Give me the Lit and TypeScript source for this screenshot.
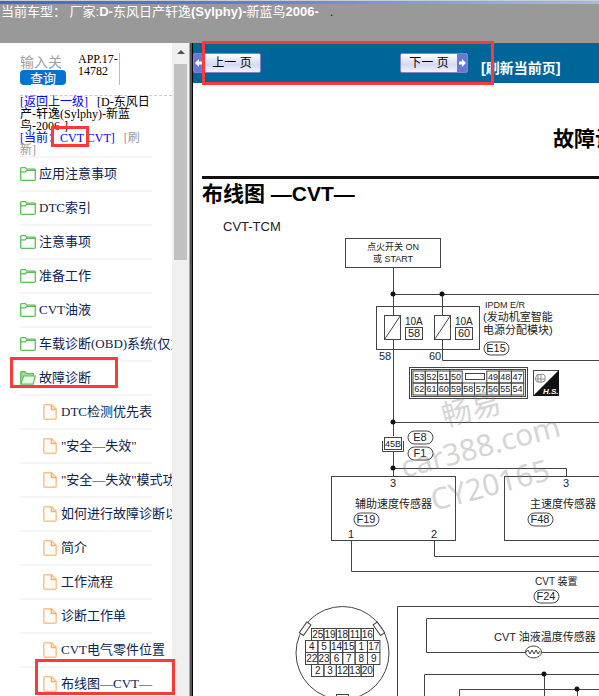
import { LitElement, html, svg, css } from "lit";
import { customElement } from "lit/decorators.js";
import { classMap } from "lit/directives/class-map.js";

type Kind = "folder" | "open" | "file";

const TREE: { kind: Kind; label: string }[] = [
  { kind: "folder", label: "应用注意事项" },
  { kind: "folder", label: "DTC索引" },
  { kind: "folder", label: "注意事项" },
  { kind: "folder", label: "准备工作" },
  { kind: "folder", label: "CVT油液" },
  { kind: "folder", label: "车载诊断(OBD)系统(仅为" },
  { kind: "open", label: "故障诊断" },
  { kind: "file", label: "DTC检测优先表" },
  { kind: "file", label: '"安全—失效"' },
  { kind: "file", label: '"安全—失效"模式功能' },
  { kind: "file", label: "如何进行故障诊断以" },
  { kind: "file", label: "简介" },
  { kind: "file", label: "工作流程" },
  { kind: "file", label: "诊断工作单" },
  { kind: "file", label: "CVT电气零件位置" },
  { kind: "file", label: "布线图—CVT—" },
];

const icon = (kind: Kind) => {
  if (kind === "file")
    return html`<svg class="ico" width="14" height="16" viewBox="0 0 14 16" fill="none" stroke="#f8c48c" stroke-width="1.5">
      <path d="M2 .8h6.6l4.6 4.6v8.6q0 1.2-1.2 1.2H2q-1.2 0-1.2-1.2V2Q.8.8 2 .8z" fill="#fffdfa" />
      <path d="M8.400 1v4.600H13" stroke="#f2b06c" />
    </svg>`;
  if (kind === "open")
    return html`<svg class="ico" width="16" height="14" viewBox="0 0 16 14" stroke="#5cbd5c" stroke-width="1.2">
      <path d="M.7 13V1.6q0-.9.9-.9H5l1.2 1.8h7.2v2.4" fill="#9bdc9b" />
      <path d="M.8 13.2 3.6 5h11.700l-2.200 8.200z" fill="#e9f9e6" />
    </svg>`;
  return html`<svg class="ico" width="16" height="14" viewBox="0 0 16 14" stroke="#5cbf5c" stroke-width="1.3">
    <path d="M.7 12.2V1.6q0-.9.9-.9h3.800l1.200 1.400h8q.7 0 .7.7v9.400q0 1.100-1.100 1.100H1.8Q.7 13.3.7 12.2z" fill="#fbfffb" />
    <path d="M.7 4.8h4.600l1.300-1.400h8.600" fill="none" />
  </svg>`;
};

@customElement("tree-nav")
export class TreeNav extends LitElement {
  static styles = css`
    :host { display: block; }
    ul { list-style: none; margin: 0; padding: 0; width: 132px; border-top: 2px solid #f5f5f5; }
    li { height: 32px; border-bottom: 2px solid #f5f5f5; }
    a {
      display: flex; align-items: center; gap: 3px; height: 32px;
      font-size: 13px; line-height: 16px; white-space: nowrap;
      color: #0c2450; text-decoration: none;
    }
    .file { padding-left: 23px; gap: 4px; }
    .ico { flex: none; }
  `;
  render() {
    return html`<ul>
      ${TREE.map(
        (n) => html`<li><a href="#" class=${classMap({ file: n.kind === "file" })}>${icon(n.kind)}<span>${n.label}</span></a></li>`
      )}
    </ul>`;
  }
}

const dot = (x: number, y: number) => svg`<circle cx=${x} cy=${y} r="2.5" fill="#111" />`;
const txt = (x: number, y: number, size: number, s: string, anchor = "start") =>
  svg`<text x=${x} y=${y} font-size=${size} text-anchor=${anchor}>${s}</text>`;
const pill = (cx: number, cy: number, s: string) => svg`
  <rect class="l" x=${cx - 12} y=${cy - 6} width="25" height="13" rx="6.5" />
  ${txt(cx, cy + 4, 11, s, "middle")}`;
const cell = (x: number, y: number, w: number, h: number, s: string, size: number) => svg`
  <rect class="l" x=${x} y=${y} width=${w} height=${h} />
  ${txt(x + w / 2, y + h / 2 + size * 0.36, size, s, "middle")}`;
const row = (x: number, y: number, w: number, h: number, size: number, items: string[]) =>
  items.map((s, i) => (s ? cell(x + i * w, y, w, h, s, size) : null));

@customElement("wiring-diagram")
export class WiringDiagram extends LitElement {
  static styles = css`
    :host { display: block; }
    svg { display: block; }
    text { font-family: "Liberation Sans", "Noto Sans CJK SC", sans-serif; fill: #222; }
    .l { fill: none; stroke: #444; stroke-width: 1; }
    .f { fill: #fff; stroke: #444; stroke-width: 1; }
    .mark text { font-family: "Noto Sans", "Noto Sans CJK SC", sans-serif; fill: #777; }
    .hs { font-weight: bold; font-style: italic; fill: #fff; }
  `;
  render() {
    return html`<svg width="786" height="520" viewBox="202 236 786 520" role="img" aria-label="CVT-TCM 布线图">
      <rect class="l" x="345.5" y="238.5" width="95" height="29" />
      ${txt(393, 250, 9, "点火开关 ON", "middle")} ${txt(393, 262, 9, "或 START", "middle")}

      <path class="l" d="M393.5 268V436M393.5 294.5H988M442.5 294.5V315M442.5 339V360.5H988" />
      <rect class="l" x="376.5" y="306.5" width="103" height="43" />
      <rect class="f" x="384.5" y="315.5" width="16" height="24" />
      <rect class="f" x="434.5" y="315.5" width="16" height="24" />
      <path class="l" d="M384.5 339.5l16-24M434.5 339.5l16-24" />
      ${dot(393, 294)} ${dot(442, 294)}
      ${txt(405, 325, 10, "10A")} ${txt(455, 325, 10, "10A")}
      ${cell(405.5, 327.5, 17, 12, "58", 11)} ${cell(455.5, 327.5, 17, 12, "60", 11)}
      ${txt(379, 360, 11, "58")} ${txt(429, 360, 11, "60")}
      ${txt(485, 308, 9, "IPDM E/R")} ${txt(483, 321, 11, "(发动机室智能")} ${txt(483, 334, 11, "电源分配模块)")}
      ${pill(496, 348, "E15")}

      <rect class="l" x="409.5" y="367.5" width="118" height="31" />
      <rect class="l" x="411.5" y="369.5" width="114" height="27" />
      ${row(413, 371, 12.3, 12, 9, ["53", "52", "51", "50", "", "", "49", "48", "47"])}
      ${row(413, 383, 12.3, 12, 9, ["62", "61", "60", "59", "58", "57", "56", "55", "54"])}
      <rect class="l" x="465.5" y="373.5" width="19" height="6" />

      <rect class="f" x="533.5" y="370.5" width="25" height="25" stroke-width=".5" />
      <path d="M559 370v26h-26z" fill="#111" />
      <path d="M535 379l2-4 6-1 2 2v5l-3 1h-5zM538 374v8M541 374v9M535 379h10" fill="none" stroke="#777" stroke-width=".8" />
      <text class="hs" x="543" y="394" font-size="8">H.S.</text>

      <path class="l" d="M393.5 422.5H988M393.5 452V476M393.5 468.5H566.5V476" />
      ${dot(393, 422)} ${dot(393, 468)}
      <rect class="f" x="384.5" y="437.5" width="17" height="12" />
      <path class="l" d="M382.5 441v10.500H403.5V441" />
      ${txt(393, 447, 9, "45B", "middle")}
      ${pill(420, 437, "E8")} ${pill(420, 453, "F1")}

      <rect class="l" x="331.5" y="476.5" width="124" height="64" />
      <rect class="l" x="504.5" y="476.5" width="124" height="64" />
      ${txt(393, 487, 11, "3", "middle")} ${txt(566, 487, 11, "3", "middle")}
      ${txt(355, 508, 11, "辅助速度传感器")} ${txt(530, 508, 11, "主速度传感器")}
      ${pill(366, 519, "F19")} ${pill(540, 519, "F48")}
      ${txt(351, 538, 11, "1", "middle")} ${txt(434, 538, 11, "2", "middle")}
      <path class="l" d="M351.5 540V571.5H988M434.5 540V556.5H988" />

      ${txt(535, 585, 10, "CVT 装置")} ${pill(546, 596, "F24")}
      <path class="l" d="M397.5 756V606.5H988M988 652.5H426.5V618.5H988M424.5 756V674.5H988M459.5 756V689.5H988M544.5 674V756M577.5 689V756" />
      ${txt(494, 641, 11, "CVT 油液温度传感器")}
      <ellipse class="f" cx="533.5" cy="652" rx="8" ry="6" />
      <path class="l" d="M526 652l2-2 2 4 2-4 2 4 2-4 2 4 2-3" />
      ${dot(544, 674)} ${dot(577, 689)}

      <circle class="l" cx="342.5" cy="653" r="46.5" />
      <rect class="f" x="303" y="622" width="5" height="13" transform="rotate(35 305 628)" />
      <rect class="f" x="376" y="622" width="5" height="13" transform="rotate(-35 379 628)" />
      <rect class="f" x="336.5" y="694.5" width="12" height="6" />
      ${row(311.5, 628.5, 12.4, 12, 10, ["25", "19", "18", "11", "16"])}
      ${row(305.5, 640.5, 12.4, 12, 10, ["4", "5", "14", "15", "1", "17"])}
      ${row(305.5, 652.5, 12.4, 12, 10, ["22", "23", "6", "7", "8", "9"])}
      ${row(311.5, 664.5, 12.4, 12, 10, ["2", "3", "12", "13", "20"])}

      <g class="mark" opacity=".3">
        <g transform="rotate(-15 445 427)">${txt(445, 427, 30, "畅易")}</g>
        <g transform="rotate(-15 404 478)">${txt(404, 478, 30, "car388.com")}</g>
        <g transform="rotate(-15 434 511)">${txt(434, 511, 30, "CY20165")}</g>
      </g>
    </svg>`;
  }
}

@customElement("app-root")
export class AppRoot extends LitElement {
  static styles = css`
    :host {
      display: flex; flex-direction: column; position: relative;
      height: 100vh; overflow: hidden; background: #fff; color: #000;
      font-family: "Liberation Serif", "Noto Sans CJK SC", serif;
    }
    header {
      flex: none; height: 43px; box-sizing: border-box; background: #999; color: #fff;
      font: 13px/16px "Liberation Sans", "Noto Sans CJK SC", sans-serif;
    }
    .strip { height: 4px; background: linear-gradient(90deg, #3f69c0, #5b7fd0 40%, #a9b9e6); border-top: 1px solid #c8ccd4; box-sizing: border-box; }
    .model { margin: 0; padding-left: 1px; white-space: pre; }
    .speck { color: #222; }
    .frames { flex: 1; display: flex; min-height: 0; }
    aside { flex: none; width: 152px; padding: 10px 0 0 20px; overflow: hidden; }
    .top { display: flex; gap: 12px; height: 42px; border-bottom: 1px dashed #ccc; }
    form { width: 46px; margin: 0; }
    input {
      display: block; width: 41px; height: 17px; border: 0; padding: 0; outline: 0; background: none;
      font: 14px/17px "Noto Sans CJK SC", sans-serif;
    }
    input::placeholder { color: #a0a0a0; opacity: 1; }
    .query {
      display: block; width: 46px; height: 15px; padding: 0; border: 0; border-radius: 4px;
      background: #0674cf; color: #fff; font: 13px/15px "Noto Sans CJK SC", sans-serif;
    }
    .ver { width: 41px; height: 32px; border-right: 1px solid #bbb; font-size: 12px; line-height: 12px; }
    .crumb { margin: 0; font-size: 12px; line-height: 12px; white-space: pre; }
    .crumb a { color: #00f; text-decoration: none; }
    .crumb a.dim { color: #999; }
    .bar { flex: none; width: 17px; background: #f0f0f0; display: flex; flex-direction: column; align-items: center; }
    .up { width: 0; height: 0; margin: 7px 0 10px; border: 4px solid transparent; border-top: 0; border-bottom: 4px solid #505050; }
    .thumb { width: 13px; height: 196px; background: #c1c1c1; }
    .split { flex: none; width: 2px; background: #555; border-left: 1px solid #aaa; border-right: 1px solid #000; }
    main { flex: 1; min-width: 0; overflow: hidden; font-family: "Liberation Sans", "Noto Sans CJK SC", sans-serif; }
    .tools { display: flex; height: 40px; background: #069; color: #fff; white-space: nowrap; }
    .page {
      display: flex; align-items: center; flex: none; width: 68px; height: 20px; margin-top: 10px; padding: 0;
      border: 1px solid #7f86c8; border-radius: 2px; overflow: hidden;
      background: linear-gradient(#fff, #d4d8f6 60%, #f2f3ff); color: #000;
      font: 12px/18px "Liberation Sans", "Noto Sans CJK SC", sans-serif;
    }
    .page span { flex: 1; text-align: center; }
    .page svg { flex: none; display: block; }
    .next { margin-left: 139px; }
    .refresh { margin: 15px 0 0 13px; font: bold 14px/20px "Liberation Sans", "Noto Sans CJK SC", sans-serif; color: #fff; text-decoration: none; }
    article { width: 786px; margin-left: 9px; }
    h1 { margin: 0; padding: 41px 0 22px; font-size: 21px; line-height: 30px; text-align: center; border-bottom: 3px solid #111; }
    h2 { margin: 0; font-size: 21px; line-height: 30px; }
    h3 { margin: 0; padding: 8px 0 0 21px; font-size: 13px; line-height: 19px; font-weight: normal; color: #222; }
    .ring { position: absolute; box-sizing: border-box; border: 3px solid #ff3838; pointer-events: none; }
    .r1 { left: 202px; top: 41px; width: 292px; height: 44px; }
    .r2 { left: 51px; top: 126px; width: 38px; height: 21px; }
    .r3 { left: 10px; top: 357px; width: 108px; height: 31px; }
    .r4 { left: 35px; top: 659px; width: 140px; height: 36px; }
  `;
  render() {
    return html`
      <header>
        <div class="strip"></div>
        <p class="model">当前车型： 厂家:<b>D-</b>东风日产轩逸<b>(Sylphy)-</b>新蓝鸟<b>2006-</b>   <span class="speck">.</span></p>
      </header>
      <div class="frames">
        <aside>
          <div class="top">
            <form @submit=${(e: Event) => e.preventDefault()}>
              <input type="text" placeholder="输入关键字" aria-label="输入关键字" />
              <button class="query">查询</button>
            </form>
            <div class="ver">APP.17-<br />14782</div>
          </div>
          <p class="crumb"><a href="#">[返回上一级]</a>   [D-东风日<br />产-轩逸(Sylphy)-新蓝<br />鸟-2006-]<br /><a href="#">[当前：CVT CVT]</a>   <a class="dim" href="#">[刷<br />新]</a></p>
          <tree-nav></tree-nav>
        </aside>
        <div class="bar"><div class="up"></div><div class="thumb"></div></div>
        <div class="split"></div>
        <main>
          <div class="tools">
            <button class="page">
              <svg width="10" height="18" viewBox="0 0 10 18"><path d="M0 0h10v18H0z" fill="#6878d6" /><path d="M1 9l4-4v2.500h3v3H5V13z" fill="#fff" /></svg>
              <span>上一 页</span>
            </button>
            <button class="page next">
              <span>下一 页</span>
              <svg width="10" height="18" viewBox="0 0 10 18"><path d="M0 0h10v18H0z" fill="#6878d6" /><path d="M9 9L5 5v2.500H2v3h3V13z" fill="#fff" /></svg>
            </button>
            <a class="refresh" href="#">[刷新当前页]</a>
          </div>
          <article>
            <h1>故障诊断</h1>
            <h2>布线图 —CVT—</h2>
            <h3>CVT-TCM</h3>
            <wiring-diagram></wiring-diagram>
          </article>
        </main>
      </div>
      <div class="ring r1"></div>
      <div class="ring r2"></div>
      <div class="ring r3"></div>
      <div class="ring r4"></div>
    `;
  }
}
